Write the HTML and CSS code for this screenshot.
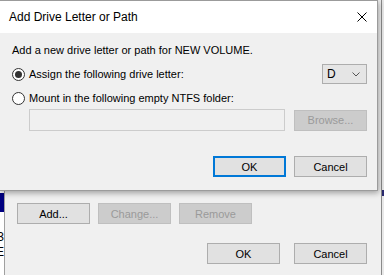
FILE: index.html
```html
<!DOCTYPE html>
<html lang="en">
<head>
    <meta charset="UTF-8">
    <title>Add Drive Letter or Path</title>
    <link rel="stylesheet" href="styles.css">
</head>
<body>

    <!-- window behind the dialog -->
    <div class="back">
        <div class="list-edge">
            <div class="list-sel"></div>
            <div class="list-text">3</div>
            <div class="list-text">E</div>
        </div>
        <div class="back-main">
            <div class="back-row">
                <button class="btn">Add...</button>
                <button class="btn" disabled>Change...</button>
                <button class="btn" disabled>Remove</button>
            </div>
            <div class="back-row end">
                <button class="btn">OK</button>
                <button class="btn">Cancel</button>
            </div>
        </div>
        <div class="right-edge">
            <div class="right-sel"></div>
        </div>
    </div>

    <div class="dialog">
        <div class="titlebar">
            <span class="title">Add Drive Letter or Path</span>
            <svg class="close" width="10" height="10" viewBox="0 0 10 10">
                <path d="M0.5 0.5 L9.5 9.5 M9.5 0.5 L0.5 9.5" stroke="#000" stroke-width="1" fill="none"/>
            </svg>
        </div>
        <div class="dialog-body">
            <div class="intro">Add a new drive letter or path for NEW VOLUME.</div>

            <div class="row">
                <label class="radio-line"><span class="radio checked"></span>Assign the following drive letter:</label>
                <div class="select">
                    <span>D</span>
                    <svg width="8" height="5" viewBox="0 0 8 5">
                        <path d="M0.5 0.5 L4 4 L7.5 0.5" stroke="#555" stroke-width="1" fill="none"/>
                    </svg>
                </div>
            </div>

            <div class="row second">
                <label class="radio-line"><span class="radio"></span>Mount in the following empty NTFS folder:</label>
            </div>

            <div class="row folder">
                <div class="textbox"></div>
                <button class="btn" disabled>Browse...</button>
            </div>

            <div class="row buttons">
                <button class="btn default">OK</button>
                <button class="btn">Cancel</button>
            </div>
        </div>
    </div>

</body>
</html>
```

FILE: styles.css
```css
body {
    margin: 0;
    width: 384px;
    height: 275px;
    overflow: hidden;
    background-color: #f0f0f0;
    font-family: "Liberation Sans", Arial, sans-serif;
    font-size: 11px;
    color: #000;
    position: relative;
}
.back {
    display: flex;
    height: 275px;
}
.list-edge {
    width: 4px;
    border-right: 1px solid #a0a0a0;
    background-color: #fff;
    overflow: hidden;
    padding-top: 193px;
}
.list-sel {
    height: 19px;
    margin-bottom: 18px;
    background-color: #000080;
}
.list-text {
    width: 4px;
    direction: rtl;
    white-space: nowrap;
    line-height: 15px;
    font-size: 12px;
}
.back-main {
    flex: 1;
    padding: 203px 14px 0 12px;
}
.back-row {
    display: flex;
    gap: 8px;
}
.back-row.end {
    justify-content: flex-end;
    gap: 14px;
    margin-top: 19px;
}
.right-edge {
    width: 2px;
    border-left: 1px solid #8a8a8a;
    background-color: #e8e8e8;
    padding-top: 190px;
}
.right-sel {
    height: 6px;
    background-color: #2a2a70;
}
.btn {
    width: 73px;
    height: 21px;
    padding: 0;
    background-color: #e1e1e1;
    border: 1px solid #adadad;
    font-family: "Liberation Sans", Arial, sans-serif;
    font-size: 11px;
    color: #000;
}
.btn:disabled {
    background-color: #cccccc;
    border-color: #bfbfbf;
    color: #9a9a9a;
}
.btn.default {
    border: 2px solid #0078d7;
}
.dialog {
    position: absolute;
    left: -1px;
    top: 0;
    width: 377px;
    height: 189px;
    background-color: #f0f0f0;
    border: 1px solid #9b9b9b;
    box-shadow: 1px 2px 6px rgba(0, 0, 0, 0.35);
}
.titlebar {
    height: 32px;
    background-color: #fff;
    display: flex;
    align-items: center;
    justify-content: space-between;
    padding: 0 10px 0 9px;
}
.title {
    font-size: 12px;
}
.close {
    margin-top: -1px;
}
.dialog-body {
    padding: 10px 10px 0 12px;
}
.intro {
    line-height: 14px;
}
.row {
    display: flex;
    align-items: center;
    justify-content: space-between;
    margin-top: 7px;
    height: 20px;
}
.row.second {
    height: 14px;
}
.radio-line {
    display: flex;
    align-items: center;
    gap: 4px;
}
.radio {
    width: 11px;
    height: 11px;
    border: 1px solid #333;
    border-radius: 50%;
    background-color: #fff;
    position: relative;
}
.radio.checked::after {
    content: "";
    position: absolute;
    left: 2px;
    top: 2px;
    width: 7px;
    height: 7px;
    border-radius: 50%;
    background-color: #333;
}
.select {
    height: 18px;
    background-color: #e5e5e5;
    border: 1px solid #adadad;
    display: flex;
    align-items: center;
    justify-content: space-between;
    padding: 0 6px 0 4px;
    box-sizing: content-box;
    width: 33px;
    font-size: 12px;
}
.row.folder {
    margin-top: 4px;
    height: 22px;
    padding-left: 17px;
}
.textbox {
    width: 254px;
    height: 20px;
    border: 1px solid #cccccc;
    background-color: #f0f0f0;
}
.row.buttons {
    margin-top: 25px;
    height: 21px;
    justify-content: flex-end;
    gap: 8px;
}
```
